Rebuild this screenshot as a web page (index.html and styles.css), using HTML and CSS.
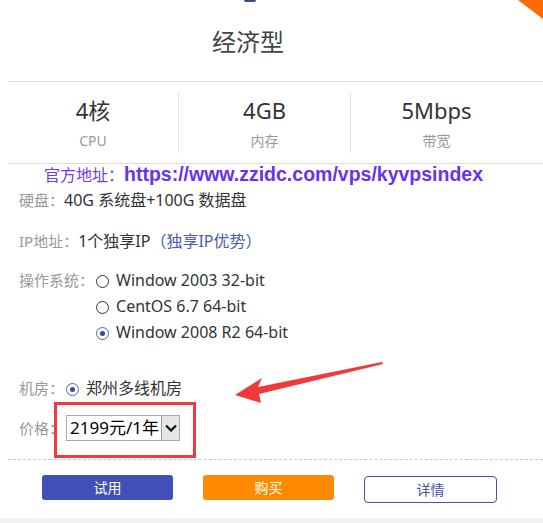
FILE: index.html
```html
<!DOCTYPE html>
<html lang="zh-CN">
<head>
	<meta charset="UTF-8">
	<title>经济型</title>
<link rel="stylesheet" href="styles.css">
</head>
<body>
<div class="corner"></div>
<div class="topmark"></div>
<div id="card">
	<div class="head">经济型</div>
	<ul class="stats">
		<li><p class="val">4核</p><p class="lab">CPU</p></li>
		<li><p class="val">4GB</p><p class="lab">内存</p></li>
		<li><p class="val">5Mbps</p><p class="lab">带宽</p></li>
	</ul>
	<p class="site">官方地址：<b>https://www.zzidc.com/vps/kyvpsindex</b></p>
	<div class="specs">
		<div class="row disk"><span class="key">硬盘：</span><span>40G 系统盘+100G 数据盘</span></div>
		<div class="row ip"><span class="key">IP地址：</span><span>1个独享IP<a class="link">（独享IP优势）</a></span></div>
		<div class="row os">
			<span class="key">操作系统：</span>
			<div class="opts">
				<label><i class="radio"></i>Window 2003 32-bit</label>
				<label><i class="radio"></i>CentOS 6.7 64-bit</label>
				<label><i class="radio on"></i>Window 2008 R2 64-bit</label>
			</div>
		</div>
		<div class="row room"><span class="key">机房：</span><label><i class="radio on"></i>郑州多线机房</label></div>
		<div class="row price">
			<span class="key">价格：</span>
			<div class="sel">
				<span class="cur">2199元/1年</span>
				<span class="drop"><svg width="12" height="8" viewBox="0 0 12 8"><path d="M1 1.5 L6 6.5 L11 1.5" fill="none" stroke="#111" stroke-width="2.2"/></svg></span>
			</div>
			<div class="mark"></div>
		</div>
	</div>
	<div class="btns">
		<a class="btn try">试用</a>
		<a class="btn buy">购买</a>
		<a class="btn more">详情</a>
	</div>
</div>
<div class="foot"></div>
<svg class="arrow" width="150" height="45" viewBox="0 0 150 45">
	<polygon points="148,1 24,26 28,17 1,34 27,42 25,33 149,3" fill="#f0393b"/>
</svg>
</body>
</html>
```
FILE: styles.css
```css
*{padding:0;margin:0;list-style:none;}
body{
	width:543px;
	height:523px;
	overflow:hidden;
	position:relative;
	background:#fff;
	font-family:"Noto Sans","Noto Sans CJK SC",sans-serif;
	color:#333;
}
/*右上角*/
.corner{
	position:absolute;
	right:0;
	top:0;
	width:25px;
	height:19px;
	background:#ff6a00;
	clip-path:polygon(0 0,100% 0,100% 100%);
}
.topmark{
	position:absolute;
	left:244px;
	top:0;
	width:12px;
	height:2px;
	background:#3b4a8a;
	border-radius:0 0 6px 6px;
}
#card{
	margin-left:8px;
	width:535px;
}
.head{
	height:81px;
	line-height:84px;
	text-align:center;
	font-size:24px;
	color:#444;
	width:480px;
}
.stats{
	display:flex;
	border-top:1px solid #ddd;
	border-bottom:1px solid #ddd;
	height:81px;
	align-items:center;
}
.stats li{
	width:171px;
	height:61px;
	text-align:center;
	border-left:1px solid #e4e4e4;
}
.stats li:first-child{
	border-left:none;
	width:170px;
}
.stats .val{
	font-size:22px;
	line-height:28px;
	color:#333;
	margin-top:4px;
}
.stats .lab{
	font-size:14px;
	line-height:26px;
	color:#999;
	margin-top:4px;
}
.site{
	height:20px;
	line-height:20px;
	margin-left:36px;
	color:#6a3cf5;
	font-size:16px;
	white-space:nowrap;
}
.site b{
	font-family:"Liberation Sans",Arial,sans-serif;
	font-size:19.5px;
	color:#6633ee;
}
.specs{
	padding-left:11px;
	font-size:16px;
}
.row{
	display:flex;
	line-height:26px;
}
.key{
	color:#999;
	font-size:15px;
}
.disk{margin-top:3px;}
.ip{margin-top:15px;}
.os{margin-top:13px;}
.link{color:#4a5bb0;}
label{
	display:flex;
	align-items:center;
}
.radio{
	display:inline-block;
	width:11px;
	height:11px;
	border:1px solid #333;
	border-radius:50%;
	margin:2px 7px 0 2px;
	position:relative;
}
.radio.on{
	border-color:#5562b0;
}
.radio.on:after{
	content:"";
	position:absolute;
	left:3px;
	top:3px;
	width:5px;
	height:5px;
	border-radius:50%;
	background:#3b4a9a;
}
.room{margin-top:30px;}
.price{
	margin-top:14px;
	position:relative;
	align-items:center;
}
.sel{
	display:flex;
	width:112px;
	height:24px;
	margin-left:2px;
	border:1px solid #aaa;
	font-size:17px;
	color:#000;
}
.sel .cur{
	flex:1;
	line-height:24px;
	padding-left:3px;
}
.sel .drop{
	width:17px;
	border-left:1px solid #999;
	background:#e6e6e6;
	display:flex;
	align-items:center;
	justify-content:center;
}
/*红色框*/
.mark{
	position:absolute;
	left:35px;
	top:-13px;
	width:136px;
	height:50px;
	border:3px solid #ee3b3e;
}
.btns{
	border-top:1px dashed #c8c8c8;
	margin-top:18px;
	padding-top:15px;
	display:flex;
	align-items:flex-start;
	padding-left:34px;
	gap:30px;
}
.btn{
	display:block;
	width:131px;
	height:25px;
	line-height:25px;
	text-align:center;
	font-size:14px;
	border-radius:3px;
	color:#fff;
}
.try{background:#4150b8;}
.buy{background:#ff8a00;}
.more{
	height:25px;
	border:1px solid #4a52a6;
	color:#4a52a6;
	background:#fff;
	border-radius:4px;
	margin-top:1px;
}
.foot{
	position:absolute;
	left:0;
	right:0;
	bottom:0;
	height:5px;
	background:#f2f2f2;
}
.arrow{
	position:absolute;
	left:234px;
	top:361px;
}
```
